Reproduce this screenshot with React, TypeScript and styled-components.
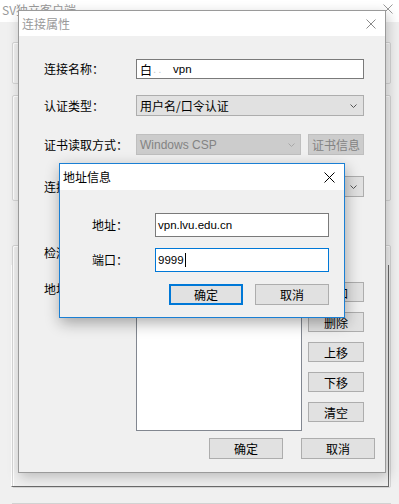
import React from 'react';
import styled, { createGlobalStyle, css } from 'styled-components';

const GlobalStyle = createGlobalStyle`
  html, body { margin: 0; padding: 0; background: #f0f0f0; }
  body { font-family: "Liberation Sans", "Noto Sans CJK SC", sans-serif; font-size: 12px; color: #000; }
`;

const cjk = `"Noto Sans CJK SC", "Liberation Sans", sans-serif`;

// ---------- background window ----------
const Screen = styled.div`
  position: relative;
  width: 399px;
  height: 504px;
  overflow: hidden;
  background: #f0f0f0;
  display: flex;
  flex-direction: column;
`;

const MainTitleBar = styled.div`
  height: 22px;
  flex: none;
  background: #fff;
  display: flex;
  justify-content: space-between;
  align-items: flex-start;
  padding: 0 6px 0 2px;
`;

const MainTitle = styled.span`
  font-family: ${cjk};
  font-size: 12px;
  line-height: 20px;
  color: #999;
`;

const MainBody = styled.div`
  flex: 1;
  display: flex;
  flex-direction: column;
  padding: 20px 8px 0 12px;
`;

const GroupBox = styled.div<{ $h: number; $gap: number }>`
  height: ${p => p.$h}px;
  margin-top: ${p => p.$gap}px;
  box-sizing: border-box;
  border: 1px solid #d5d5d5;
  border-radius: 2px;
  box-shadow: inset 1px 1px #fff;
  display: flex;
  flex-direction: column;
  padding-right: 1px;
`;

const RaisedPanel = styled.div`
  flex: 1;
  margin: 19px 0 0 -2px;
  border-left: 1px solid #fff;
  border-right: 1px solid #6a6a6a;
  border-bottom: 1px solid #6a6a6a;
`;

const StatusLine = styled.div`
  margin-top: 15px;
  border-top: 1px solid #d2d2d2;
  height: 1px;
`;

// ---------- dialog windows ----------
const Window = styled.div<{ $left: number; $top: number; $w: number; $h: number; $active?: boolean }>`
  position: absolute;
  left: ${p => p.$left}px;
  top: ${p => p.$top}px;
  width: ${p => p.$w}px;
  height: ${p => p.$h}px;
  box-sizing: border-box;
  background: #f0f0f0;
  display: flex;
  flex-direction: column;
  border: 1px solid ${p => (p.$active ? '#1a7fd4' : '#9a9a9a')};
  box-shadow: ${p => (p.$active ? '1px 5px 14px rgba(0,0,0,0.32)' : '2px 4px 12px rgba(0,0,0,0.22)')};
`;

const TitleBar = styled.div<{ $h: number; $padRight: number }>`
  height: ${p => p.$h}px;
  flex: none;
  background: #fff;
  display: flex;
  align-items: center;
  justify-content: space-between;
  padding: 0 ${p => p.$padRight}px 0 3px;
`;

const TitleText = styled.span<{ $active?: boolean }>`
  font-family: ${cjk};
  font-size: 12px;
  line-height: 16px;
  color: ${p => (p.$active ? '#000' : '#999')};
`;

const DialogBody = styled.div<{ $pad: string }>`
  flex: 1;
  display: flex;
  flex-direction: column;
  padding: ${p => p.$pad};
`;

const Row = styled.div<{ $gap: number; $h: number; $label: number }>`
  display: grid;
  grid-template-columns: ${p => p.$label}px 1fr;
  align-items: center;
  height: ${p => p.$h}px;
  margin-top: ${p => p.$gap}px;
`;

const Label = styled.span`
  font-family: ${cjk};
  font-size: 12px;
  line-height: 14px;
  white-space: nowrap;
`;

const Field = styled.div<{ $focused?: boolean; $pad?: number }>`
  height: 100%;
  box-sizing: border-box;
  background: #fff;
  border: 1px solid ${p => (p.$focused ? '#0078d7' : '#7a7a7a')};
  display: flex;
  align-items: center;
  padding-left: ${p => p.$pad ?? 3}px;
  font-size: 11.5px;
  white-space: nowrap;
  overflow: hidden;
`;

const CjkText = styled.span`
  font-family: ${cjk};
  font-size: 12px;
`;

const Smudge = styled.span`
  display: inline-block;
  width: 20px;
  color: #c9c9c9;
  letter-spacing: 2px;
  padding-left: 1px;
`;

const Caret = styled.span`
  display: inline-block;
  width: 1px;
  height: 14px;
  background: #000;
  margin-left: 1px;
`;

const Select = styled.div<{ $disabled?: boolean; $padRight?: number }>`
  height: 100%;
  box-sizing: border-box;
  display: flex;
  align-items: center;
  justify-content: space-between;
  padding: 0 ${p => p.$padRight ?? 6}px 0 3px;
  font-family: ${cjk};
  font-size: 12px;
  ${p =>
    p.$disabled
      ? css`
          background: #cccccc;
          border: 1px solid #bfbfbf;
          color: #838383;
          font-family: "Liberation Sans", sans-serif;
        `
      : css`
          background: #e1e1e1;
          border: 1px solid #adadad;
          color: #000;
        `}
`;

const Inline = styled.div<{ $gap: number }>`
  display: flex;
  align-items: stretch;
  gap: ${p => p.$gap}px;
  height: 100%;
`;

const Button = styled.div<{ $w: number; $h: number; $focused?: boolean; $disabled?: boolean }>`
  width: ${p => p.$w}px;
  height: ${p => p.$h}px;
  flex: none;
  box-sizing: border-box;
  display: flex;
  align-items: center;
  justify-content: center;
  font-family: ${cjk};
  font-size: 12px;
  background: ${p => (p.$disabled ? '#cccccc' : '#e1e1e1')};
  color: ${p => (p.$disabled ? '#838383' : '#000')};
  border: ${p => (p.$focused ? '2px solid #0078d7' : `1px solid ${p.$disabled ? '#bfbfbf' : '#adadad'}`)};
`;

const ListRow = styled.div`
  display: grid;
  grid-template-columns: 92px 166px 56px;
  column-gap: 0;
  margin-top: 19px;
  align-items: start;
`;

const ListBox = styled.div`
  height: 149px;
  box-sizing: border-box;
  background: #fff;
  border: 1px solid #828790;
  margin-right: 6px;
  width: 166px;
`;

const ButtonColumn = styled.div`
  display: flex;
  flex-direction: column;
  gap: 10px;
  margin-left: 6px;
`;

const Footer = styled.div<{ $gap: number; $top: number; $right: number }>`
  display: flex;
  justify-content: flex-end;
  gap: ${p => p.$gap}px;
  margin-top: ${p => p.$top}px;
  margin-right: ${p => p.$right}px;
`;

const Cross = ({ size, color, width = 1 }: { size: number; color: string; width?: number }) => (
  <svg width={size} height={size} viewBox={`0 0 ${size} ${size}`}>
    <path d={`M0.5 0.5 L${size - 0.5} ${size - 0.5} M${size - 0.5} 0.5 L0.5 ${size - 0.5}`} stroke={color} strokeWidth={width} fill="none" />
  </svg>
);

const Chevron = ({ color }: { color: string }) => (
  <svg width="7" height="4" viewBox="0 0 7 4">
    <polyline points="0.5,0.5 3.5,3.5 6.5,0.5" stroke={color} strokeWidth="1" fill="none" />
  </svg>
);

const MainCloseWrap = styled.div`
  margin-top: 4px;
  display: flex;
`;

const ConnectionDialog: React.FC = () => (
  <Window $left={18} $top={10} $w={368} $h={463}>
    <TitleBar $h={25} $padRight={9}>
      <TitleText>连接属性</TitleText>
      <Cross size={10} color="#8a8a8a" />
    </TitleBar>
    <DialogBody $pad="0 21px 0 25px">
      <Row $gap={23} $h={20} $label={92}>
        <Label>连接名称：</Label>
        <Field>
          <CjkText>白</CjkText>
          <Smudge>..</Smudge>
          vpn
        </Field>
      </Row>
      <Row $gap={16} $h={21} $label={92}>
        <Label>认证类型：</Label>
        <Select>
          用户名/口令认证
          <Chevron color="#555" />
        </Select>
      </Row>
      <Row $gap={18} $h={21} $label={92}>
        <Label>证书读取方式：</Label>
        <Inline $gap={7}>
          <Select $disabled $padRight={5} style={{ flex: 1 }}>
            Windows CSP
            <Chevron color="#a8a8a8" />
          </Select>
          <Button $w={56} $h={21} $disabled>证书信息</Button>
        </Inline>
      </Row>
      <Row $gap={21} $h={21} $label={92}>
        <Label>连接协议：</Label>
        <Select>
          TCP
          <Chevron color="#555" />
        </Select>
      </Row>
      <Row $gap={46} $h={20} $label={92}>
        <Label>检测间隔：</Label>
        <span />
      </Row>
      <ListRow>
        <Label>地址列表：</Label>
        <ListBox />
        <ButtonColumn>
          <Button $w={56} $h={20}>添加</Button>
          <Button $w={56} $h={20}>删除</Button>
          <Button $w={56} $h={20}>上移</Button>
          <Button $w={56} $h={20}>下移</Button>
          <Button $w={56} $h={20}>清空</Button>
        </ButtonColumn>
      </ListRow>
      <Footer $gap={18} $top={7} $right={-11}>
        <Button $w={74} $h={21}>确定</Button>
        <Button $w={74} $h={21}>取消</Button>
      </Footer>
    </DialogBody>
  </Window>
);

const AddressDialog: React.FC = () => (
  <Window $left={59} $top={163} $w={286} $h={155} $active>
    <TitleBar $h={26} $padRight={9}>
      <TitleText $active>地址信息</TitleText>
      <Cross size={11} color="#000" />
    </TitleBar>
    <DialogBody $pad="0 15px 0 32px">
      <Row $gap={23} $h={24} $label={63}>
        <Label>地址：</Label>
        <Field $pad={2}>vpn.lvu.edu.cn</Field>
      </Row>
      <Row $gap={11} $h={24} $label={63}>
        <Label>端口：</Label>
        <Field $pad={2} $focused>
          9999
          <Caret />
        </Field>
      </Row>
      <Footer $gap={12} $top={12} $right={0}>
        <Button $w={74} $h={21} $focused>确定</Button>
        <Button $w={74} $h={21}>取消</Button>
      </Footer>
    </DialogBody>
  </Window>
);

export default function App() {
  return (
    <>
      <GlobalStyle />
      <Screen>
        <MainTitleBar>
          <MainTitle>SV独立客户端</MainTitle>
          <MainCloseWrap>
            <Cross size={10} color="#9a9a9a" />
          </MainCloseWrap>
        </MainTitleBar>
        <MainBody>
          <GroupBox $h={42} $gap={0} />
          <GroupBox $h={106} $gap={11} />
          <GroupBox $h={243} $gap={44}>
            <RaisedPanel />
          </GroupBox>
          <StatusLine />
        </MainBody>
        <ConnectionDialog />
        <AddressDialog />
      </Screen>
    </>
  );
}
